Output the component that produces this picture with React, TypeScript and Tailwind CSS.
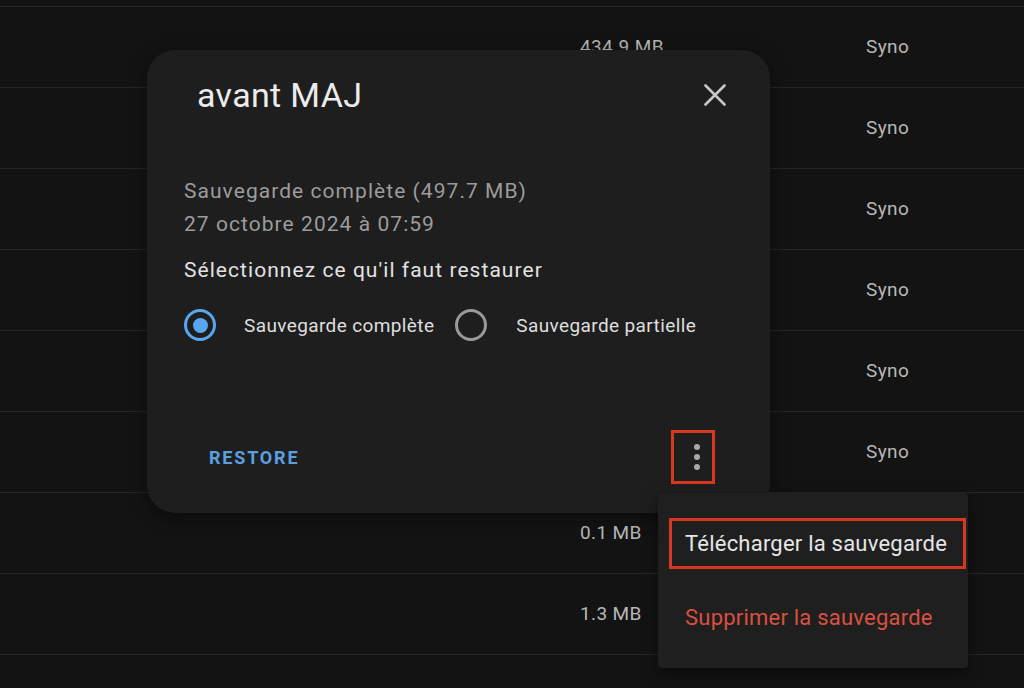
const rows = [
  { size: "434.9 MB", agent: "Syno" },
  { size: "", agent: "Syno" },
  { size: "", agent: "Syno" },
  { size: "", agent: "Syno" },
  { size: "", agent: "Syno" },
  { size: "", agent: "Syno" },
  { size: "0.1 MB", agent: "" },
  { size: "1.3 MB", agent: "" },
];

function Radio({ checked }: { checked: boolean }) {
  if (checked) {
    return (
      <span className="flex h-[32px] w-[32px] shrink-0 items-center justify-center rounded-full border-[3px] border-[#5aa6ee]">
        <span className="h-[15px] w-[15px] rounded-full bg-[#5aa6ee]" />
      </span>
    );
  }
  return <span className="h-[32px] w-[32px] shrink-0 rounded-full border-[3px] border-[#9a9a9a]" />;
}

export default function App() {
  return (
    <div
      className="relative h-[688px] w-[1024px] overflow-hidden bg-[#131313]"
      style={{ fontFamily: "Roboto, 'Liberation Sans', sans-serif" }}
    >
      <div className="h-[7px] border-b border-[#252525]" />
      {rows.map((row, i) => (
        <div
          key={i}
          className="flex h-[81px] items-center border-b border-[#252525] text-[19px] tracking-[0.02em] text-[#b8b8b8]"
        >
          <div className="w-[866px] pl-[580px]">{row.size}</div>
          <div>{row.agent}</div>
        </div>
      ))}

      {/* dialog */}
      <div className="absolute left-[147px] top-[50px] flex h-[463px] w-[623px] flex-col rounded-[28px] bg-[#1e1e1e] shadow-[0_4px_18px_rgba(0,0,0,0.45)]">
        <div className="flex items-center justify-between pl-[50px] pr-[44px] pt-[25px]">
          <h2 className="text-[34px] leading-[40px] tracking-[0.01em] text-[#ececec]">avant MAJ</h2>
          <svg width="22" height="22" viewBox="0 0 22 22" className="text-[#c8c8c8]">
            <path d="M1.5 1.5 20.5 20.5M20.5 1.5 1.5 20.5" stroke="currentColor" strokeWidth="2.6" strokeLinecap="round" />
          </svg>
        </div>
        <div className="mt-[60px] px-[37px] text-[21px] leading-[33px] tracking-[0.05em]">
          <p className="text-[#9c9c9c]">Sauvegarde complète (497.7 MB)</p>
          <p className="text-[#9c9c9c]">27 octobre 2024 à 07:59</p>
          <p className="mt-[13px] text-[#e2e2e2]">Sélectionnez ce qu'il faut restaurer</p>
          <div className="mt-[18px] flex h-[40px] items-center text-[19px] tracking-[0.02em] text-[#dedede]">
            <Radio checked />
            <span className="ml-[28px] mr-[21px]">Sauvegarde complète</span>
            <Radio checked={false} />
            <span className="ml-[29px]">Sauvegarde partielle</span>
          </div>
        </div>
        <div className="mt-auto mb-[29px] flex items-center justify-between pl-[62px] pr-[55px]">
          <span className="text-[18px] font-bold tracking-[0.1em] text-[#5b9fe0]">RESTORE</span>
          <button className="flex h-[54px] w-[44px] flex-col items-center justify-center gap-[4px] border-[3px] border-[#d8381f] pl-[8px]">
            <span className="h-[6px] w-[6px] rounded-full bg-[#a8a8a8]" />
            <span className="h-[6px] w-[6px] rounded-full bg-[#a8a8a8]" />
            <span className="h-[6px] w-[6px] rounded-full bg-[#a8a8a8]" />
          </button>
        </div>
      </div>

      {/* menu */}
      <div className="absolute left-[658px] top-[493px] h-[175px] w-[310px] rounded-[4px] bg-[#1f1f1f] pt-[25px] shadow-[0_4px_14px_rgba(0,0,0,0.5)]">
        <div className="ml-[11px] mr-[2px] flex h-[51px] items-center border-[3px] border-[#d8381f] pl-[13px] text-[22px] tracking-[0.01em] text-[#e6e6e6]">
          Télécharger la sauvegarde
        </div>
        <div className="mt-[36px] pl-[27px] text-[22px] leading-[26px] tracking-[0.01em] text-[#d9503f]">
          Supprimer la sauvegarde
        </div>
      </div>
    </div>
  );
}
